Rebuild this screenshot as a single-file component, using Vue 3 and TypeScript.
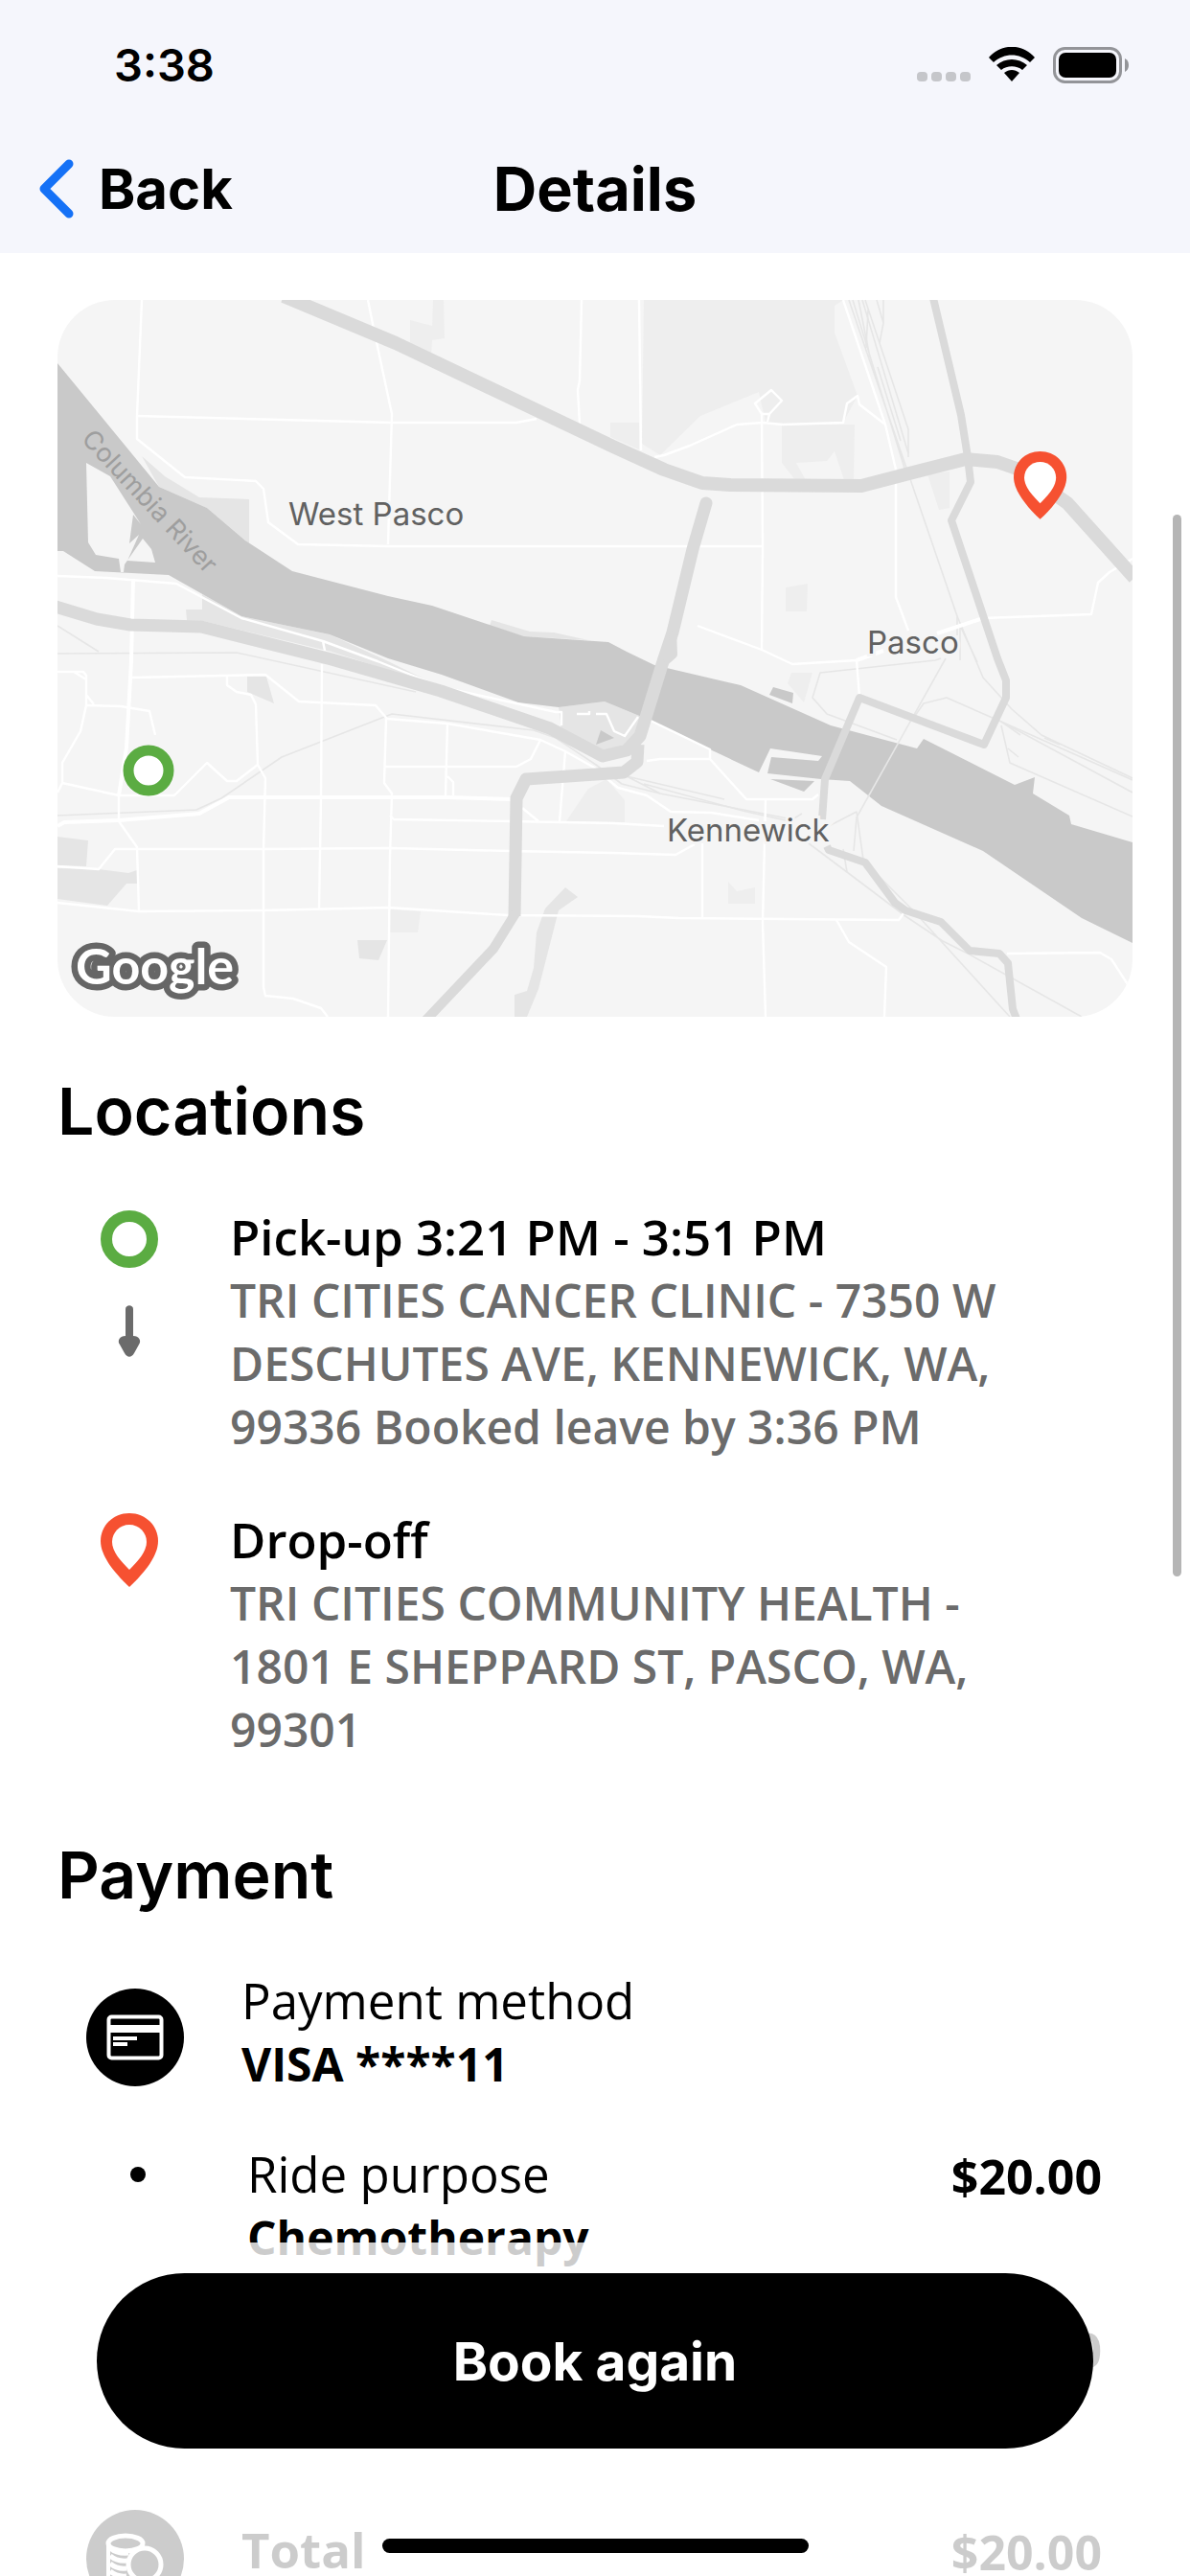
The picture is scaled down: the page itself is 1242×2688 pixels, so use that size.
<script setup lang="ts">
interface Stop {
  kind: 'pickup' | 'dropoff'
  title: string
  address: string
}

interface Label {
  text: string
  x: number
  y: number
}

const stops: Stop[] = [
  {
    kind: 'pickup',
    title: 'Pick-up 3:21 PM - 3:51 PM',
    address:
      'TRI CITIES CANCER CLINIC - 7350 W DESCHUTES AVE, KENNEWICK, WA, 99336 Booked leave by 3:36 PM',
  },
  {
    kind: 'dropoff',
    title: 'Drop-off',
    address: 'TRI CITIES COMMUNITY HEALTH - 1801 E SHEPPARD ST, PASCO, WA, 99301',
  },
]

const towns: Label[] = [
  { text: 'West Pasco', x: 241, y: 235 },
  { text: 'Pasco', x: 845, y: 369 },
  { text: 'Kennewick', x: 636, y: 565 },
]

const parks: string[] = [
  'M612 0H820L811 6V34L835 100L820 128L740 130L735 110L732 96L671 121L629 162L610 150Z',
  'M577 128H607V156L577 143Z',
  'M756 130H832L831 188H821L811 158L803 168L771 170L781 188H770L756 170Z',
  'M908 182L931 179V217L920 219Z',
  'M760 300L783 296L782 325H760Z',
  'M368 21L391 27L392 0H403L404 40L391 42L390 59L368 49Z',
  'M766 389H788L779 420L762 400Z',
  'M700 607L709 617L728 613V630H700Z',
  'M347 636L379 638L376 660H347Z',
  'M531 544L554 510L573 500L592 522V545Z',
]

const greens: string[] = [
  'M88 163L112 184L148 206L200 208V254L156 217L106 195Z',
  'M151 307V323H134L135 334L152 335L286 367L400 404L345 377L284 349L192 330Z',
  'M453 334L493 346L518 347L554 355L487 351L451 340Z',
  'M198 393H218L226 421L198 409Z',
  'M0 560L32 564L30 591L0 590Z',
  'M0 593L43 594L74 598L83 595V609H72L52 632L0 625Z',
  'M313 668H344L335 689L315 687Z',
  'M530 613L543 623L523 637L502 719L490 748H477V725L490 721L497 697L500 660L509 635Z',
  'M523 425L571 419L617 438L594 470L569 476L526 450Z',
]

const roads: string[] = [
  'M88 0L83 121V145L133 185L207 189L215 197L220 232L251 255L345 257H736',
  'M83 121L233 125L349 128H479L500 124',
  'M324 0L330 30L349 119L345 255',
  'M547 0L545 84L543 94L545 129',
  'M0 288L51 290L124 296L192 332L277 356L334 377L401 404L520 430H526V444M277 356L279 366',
  'M607 0L609 157',
  'M623 164L633 162L660 152L709 130L736 128L757 130L820 128L824 108L835 100L837 109L864 130',
  'M820 0L864 130L875 177V310L888 345',
  'M745 94L756 105L743 119H735L728 108ZM743 119L741 127M735 119L736 258L735 365',
  'M668 340L735 365L767 380L834 376M834 376L837 414M966 332L1079 328L1086 295L1098 284L1122 270',
  'M0 388H27L30 392V423L24 450L5 483V504L0 514M17 388L30 396M30 412L38 422',
  'M5 504L64 517H122L156 483L177 502H187L209 485',
  'M30 423L66 424L96 429L102 454',
  'M78 394L217 391L252 419L332 423L344 437L407 442L504 459L530 471L562 489',
  'M177 392V402L187 409L202 412L207 422L209 485L217 499L215 574V717L217 726L246 729L275 739L282 748',
  'M276 380L275 520L273 635',
  'M343 437L341 504L349 515L347 580L345 748',
  'M407 442L405 517M407 497L413 503V517M341 487H479L494 479L504 459M530 471L524 544',
  'M347 538L351 542L474 544L580 546L633 549M485 530L502 544',
  'M0 591L43 594L60 573H215L347 572L472 575L580 577L645 579L665 568',
  'M64 517V544L83 571L85 638',
  'M0 629L85 638L215 637L345 634L470 642L606 643L648 645L878 647L883 640',
  'M739 522L736 650L739 748M673 567V644M813 647L826 670L865 696L863 748',
  'M991 682L1088 681L1100 688L1122 722',
  'M573 499L585 509L615 517L640 534L682 535L732 543',
  'M615 481L629 479H681L719 521H788L794 516M617 438L681 469V479',
  'M562 432H573L581 450L592 455L606 435M542 432H555V429',
]

const mainRoads: string[] = [
  'M79 291L77 377L72 467L64 517',
  'M0 549L7 545L64 543L148 536L179 519H407L474 521',
  'M834 376L862 366M918 348L966 332',
]

const rails: string[] = [
  'M0 340L43 367M0 369L187 368L374 409',
  'M0 538L145 532L171 520L234 477L349 432L497 449L520 457L562 485L589 505L629 515L721 533L767 542',
  'M594 497L696 521M594 497L629 515M612 505L715 533L760 543',
  'M826 0L889 184L939 330V350M830 0L886 182M836 0L844 40L848 60M840 0L888 160V164',
  'M843 0L888 135V160M846 10L844 50M855 0L862 24L858 45L888 135M862 0V24M856 70L880 147',
  'M939 330L966 394L996 427L1027 454L1122 499M942 340V376M943 342L960 378',
  'M922 374L916 376L796 389L788 415L803 432L876 459',
  'M927 374L834 540L831 575M895 434L904 421L928 415L985 440L1122 501',
  'M985 440L1122 514M985 444L994 483L1122 539M985 440L1005 454M992 468L1003 477M1030 457L1046 464',
  'M805 549L834 534L841 584M820 573L824 597',
  'M784 567L824 597L885 643L924 669L950 682L1069 748M843 587L893 637L994 748M767 542L777 536',
]
</script>

<template>
  <div class="screen">
    <header class="top">
      <div class="status">
        <time class="clock">3:38</time>
        <div class="indicators">
          <svg class="signal" viewBox="0 0 56 10" aria-hidden="true">
            <rect v-for="n in 4" :key="n" :x="(n - 1) * 15" width="11" height="10" rx="4" fill="#c5c6ca" />
          </svg>
          <svg class="wifi" viewBox="0 0 48 36" aria-hidden="true">
            <path d="M0 11C13-4 35-4 48 11L43 16C32 6 16 6 5 16Z" />
            <path d="M8 19C17 11 31 11 40 19L35 24C29 19 19 19 13 24Z" />
            <path d="M16 27C21 23 27 23 32 27L24 36Z" />
          </svg>
          <svg class="battery" viewBox="0 0 80 38" aria-hidden="true">
            <rect x="1.5" y="1.5" width="69" height="35" rx="11" fill="none" stroke="#939498" stroke-width="3" />
            <rect x="6" y="6" width="60" height="26" rx="7" />
            <path d="M75 12Q79 14 79 19T75 26Z" fill="#939498" />
          </svg>
        </div>
      </div>
      <nav class="bar">
        <button class="back" type="button">
          <svg viewBox="0 0 37 62" aria-hidden="true">
            <path d="M32 5L6 31L32 57" fill="none" stroke="#1571f6" stroke-width="9" stroke-linecap="round" stroke-linejoin="round" />
          </svg>
          <span>Back</span>
        </button>
        <h1>Details</h1>
      </nav>
    </header>

    <main class="content">
      <svg class="map" viewBox="0 0 1122 748" role="img" aria-label="Ride map">
        <rect width="1122" height="748" fill="#f5f5f5" />
        <path v-for="d in parks" :key="d" :d="d" fill="#eeeeee" />
        <path v-for="d in greens" :key="d" :d="d" fill="#e5e5e5" />
        <g fill="#c9c9c9">
          <path
            fill-rule="evenodd"
            d="M0 66L106 195L156 217L196 251L245 283L345 309L391 319L487 351L575 357L594 367L623 381L713 402L807 444L897 468L904 458L999 506L1020 498L1018 515L1056 538L1058 547L1122 566V671L1069 645L966 575L860 528L827 502L797 500L741 494L745 477L794 481L798 476L744 468L732 493L681 469L617 438L571 419L523 425L481 420L401 391L345 374L284 349L192 330L116 287L39 283L6 262H0ZM30 170L55 184L87 234L79 224L75 254L85 245L73 272L102 274L98 260L89 249L70 276L69 284H66L64 270L40 266L32 253Z"
          />
          <path d="M747 404L768 410L767 421L743 412ZM744 500L790 502L779 513ZM567 449L581 457L562 464Z" />
        </g>
        <g fill="none" stroke-linejoin="round">
          <path v-for="d in rails" :key="d" :d="d" stroke="#e6e6e6" stroke-width="1.6" />
          <path v-for="d in roads" :key="d" :d="d" stroke="#ffffff" stroke-width="2.4" />
          <path v-for="d in mainRoads" :key="d" :d="d" stroke="#ffffff" stroke-width="4" />
          <g stroke="#dadada">
            <path d="M236 -4L353 45L580 153L633 177L673 191L702 193L839 194L889 181L948 166L981 169L1004 177L1054 212L1124 290" stroke-width="14" />
            <path d="M-2 320L41 333L76 339L150 341L286 375L400 408L514 447L569 476L594 470L608 455L633 374L642 347L663 260L677 212" stroke-width="13" stroke-linecap="round" />
            <path d="M642 345L643 370L634 378" stroke-width="8" />
            <path d="M606 464L605 482L591 493L489 500L479 520L477 643" stroke-width="13" />
            <path d="M478 640L455 677L384 752" stroke-width="10" />
            <path d="M914 -2L943 120L950 164L953 190L933 230L981 374L990 397V415L967 464L837 415L801 500L798 542M803 570L805 574L843 587L874 629L885 637L922 649L952 679L983 682L992 692L997 740L1001 750" stroke-width="8" />
          </g>
        </g>
        <g class="town">
          <text v-for="town in towns" :key="town.text" :x="town.x" :y="town.y">{{ town.text }}</text>
        </g>
        <text class="river" transform="translate(24 146) rotate(47)">Columbia River</text>
        <text class="brand" x="19" y="714">Google</text>
        <circle cx="95" cy="491" r="21" fill="#ffffff" stroke="#5bac42" stroke-width="11" />
        <g transform="translate(998 158) scale(.92)">
          <path d="M30 0C47 0 60 13 60 29C60 44 47 61 30 77C13 61 0 44 0 29C0 13 13 0 30 0Z" fill="#f65131" />
          <path d="M30 12C40 12 48 20 48 30C48 40 39 50 30 59C21 50 12 40 12 30C12 20 20 12 30 12Z" fill="#ffffff" />
        </g>
      </svg>

      <section class="locations">
        <h2>Locations</h2>
        <ul class="stops">
          <li v-for="stop in stops" :key="stop.title" class="stop">
            <svg v-if="stop.kind === 'pickup'" class="mark" viewBox="0 0 60 154" aria-hidden="true">
              <circle cx="30" cy="30" r="24" fill="none" stroke="#5bac42" stroke-width="12" />
              <path d="M26 103C26 98 34 98 34 103V131C40 131 43 136 40 140L35 149C32 154 28 154 25 149L20 140C17 136 20 131 26 131Z" fill="#6b6b6b" />
            </svg>
            <svg v-else class="mark" viewBox="0 0 60 78" aria-hidden="true">
              <path d="M30 0C47 0 60 13 60 29C60 44 47 61 30 77C13 61 0 44 0 29C0 13 13 0 30 0Z" fill="#f65131" />
              <path d="M30 12C40 12 48 20 48 30C48 40 39 50 30 59C21 50 12 40 12 30C12 20 20 12 30 12Z" fill="#ffffff" />
            </svg>
            <div class="place">
              <h3>{{ stop.title }}</h3>
              <p>{{ stop.address }}</p>
            </div>
          </li>
        </ul>
      </section>

      <section class="payment">
        <h2>Payment</h2>
        <div class="rows">
          <div class="row">
            <svg class="badge" viewBox="0 0 102 102" aria-hidden="true">
              <circle cx="51" cy="51" r="51" />
              <rect x="23.5" y="29.5" width="55" height="43" rx="3" fill="none" stroke="#ffffff" stroke-width="4" />
              <path d="M25 38H77V46H25ZM28 50H53V54H28ZM28 56H43V60H28Z" fill="#ffffff" />
            </svg>
            <div class="info">
              <span>Payment method</span>
              <strong>VISA ****11</strong>
            </div>
          </div>
          <div class="row">
            <span class="dot"></span>
            <div class="info">
              <span>Ride purpose</span>
              <strong>Chemotherapy</strong>
            </div>
            <strong class="amount">$20.00</strong>
          </div>
          <div class="row fare">
            <span class="dot"></span>
            <div class="info"><span>Ride fare</span></div>
            <strong class="amount">$20.00</strong>
          </div>
          <div class="row total">
            <svg class="badge" viewBox="0 0 102 102" aria-hidden="true">
              <circle cx="51" cy="51" r="51" />
              <g fill="none" stroke="#ffffff">
                <path d="M23 35V82Q40 90 54 82" stroke-width="4" />
                <ellipse cx="41" cy="35" rx="18" ry="8" stroke-width="5" />
                <path d="M59 35V42" stroke-width="4" />
                <path d="M25 40Q32 46 44 45M25 48Q32 54 43 53M25 56Q32 62 42 61M25 64Q32 70 42 69M25 72Q32 78 46 77" stroke-width="5" />
              </g>
              <circle cx="61" cy="57" r="17" stroke="#ffffff" stroke-width="5" />
            </svg>
            <strong class="sum">Total</strong>
            <strong class="amount">$20.00</strong>
          </div>
        </div>
      </section>
    </main>

    <div class="scrollbar"></div>
    <footer class="dock">
      <button class="book" type="button">Book again</button>
      <div class="home"></div>
    </footer>
  </div>
</template>

<style>
body {
  margin: 0;
}
</style>

<style scoped>
.screen {
  position: relative;
  display: flex;
  flex-direction: column;
  height: 100vh;
  overflow: hidden;
  background: #ffffff;
  color: #000000;
  font-family: 'Open Sans', 'Noto Sans', sans-serif;
  font-size: 51px;
  line-height: 66px;
}

h1,
h2,
h3,
p,
ul {
  margin: 0;
  padding: 0;
}

.top {
  flex: none;
  background: #f5f6fc;
  font-family: Inter, sans-serif;
}

.status {
  display: flex;
  align-items: center;
  justify-content: space-between;
  height: 136px;
  padding: 0 63px 0 119px;
}

.clock {
  font-size: 47px;
  font-weight: 600;
}

.indicators {
  display: flex;
  align-items: flex-end;
  gap: 19px;
}

.signal {
  width: 56px;
  height: 10px;
  margin-bottom: 2px;
}

.wifi {
  width: 48px;
  height: 36px;
  margin-bottom: 2px;
}

.battery {
  width: 80px;
  height: 38px;
}

.bar {
  display: grid;
  grid-template-columns: 1fr auto 1fr;
  align-items: center;
  height: 122px;
  padding: 0 40px 6px;
}

.back {
  display: flex;
  align-items: center;
  gap: 26px;
  justify-self: start;
  padding: 0;
  border: 0;
  background: none;
  color: inherit;
  font: 700 58px/60px Inter, sans-serif;
}

.back svg {
  width: 37px;
  height: 62px;
}

h1 {
  font-size: 63px;
  font-weight: 700;
}

.content {
  flex: 1;
  min-height: 0;
  overflow: hidden;
  padding: 49px 60px 0;
}

.map {
  display: block;
  width: 100%;
  height: auto;
  border-radius: 60px;
}

.town {
  fill: #616161;
  stroke: #f5f5f5;
  stroke-width: 6px;
  paint-order: stroke;
  font: 400 33px Inter, sans-serif;
}

.river {
  fill: #9e9e9e;
  font: 400 27px Inter, sans-serif;
}

.brand {
  fill: #ffffff;
  stroke: #666666;
  stroke-width: 13px;
  stroke-linejoin: round;
  paint-order: stroke;
  font: 700 52px Lato, sans-serif;
}

h2 {
  font: 600 68px/84px Inter, sans-serif;
}

.locations {
  margin-top: 56px;
}

.stops {
  display: flex;
  flex-direction: column;
  gap: 51px;
  margin-top: 56px;
  list-style: none;
}

.stop {
  display: flex;
  align-items: flex-start;
  gap: 75px;
  padding: 0 102px 0 45px;
}

.mark {
  flex: none;
  width: 60px;
  margin-top: 6px;
}

h3 {
  font-size: 51px;
  font-weight: 600;
  line-height: 67px;
}

.place p {
  color: #6b6b6b;
  font-size: 48px;
  font-weight: 600;
}

.payment {
  margin-top: 76px;
}

.rows {
  display: flex;
  flex-direction: column;
  gap: 48px;
  margin-top: 56px;
  padding: 0 32px 0 30px;
}

.row {
  display: flex;
  align-items: flex-start;
  gap: 60px;
}

.badge {
  flex: none;
  width: 102px;
  height: 102px;
  margin-top: 21px;
}

.info {
  display: flex;
  flex: 1;
  flex-direction: column;
  line-height: 67px;
}

.info strong {
  font-size: 48px;
  line-height: 66px;
}

.dot {
  flex: none;
  width: 16px;
  height: 16px;
  margin: 26px 46px;
  border-radius: 8px;
  background: #000000;
}

.amount {
  font-size: 50px;
  line-height: 72px;
}

.fare {
  height: 133px;
}

.total {
  margin-top: 22px;
  line-height: 52px;
}

.total .badge {
  margin-top: 0;
}

.sum {
  flex: 1;
  padding-top: 15px;
}

.total .amount {
  padding-top: 18px;
  line-height: 52px;
}

.scrollbar {
  position: absolute;
  top: 537px;
  right: 9px;
  width: 9px;
  height: 1108px;
  border-radius: 5px;
  background: #b5b5b5;
}

.dock {
  position: absolute;
  right: 0;
  bottom: 0;
  left: 0;
  display: flex;
  flex-direction: column;
  align-items: center;
  padding: 32px 101px 24px;
  background: rgba(255, 255, 255, 0.8);
}

.book {
  width: 100%;
  height: 183px;
  margin-bottom: 94px;
  border: 0;
  border-radius: 92px;
  background: #000000;
  color: #ffffff;
  font: 700 55px/66px Inter, sans-serif;
}

.home {
  width: 445px;
  height: 15px;
  border-radius: 8px;
  background: #000000;
}
</style>
